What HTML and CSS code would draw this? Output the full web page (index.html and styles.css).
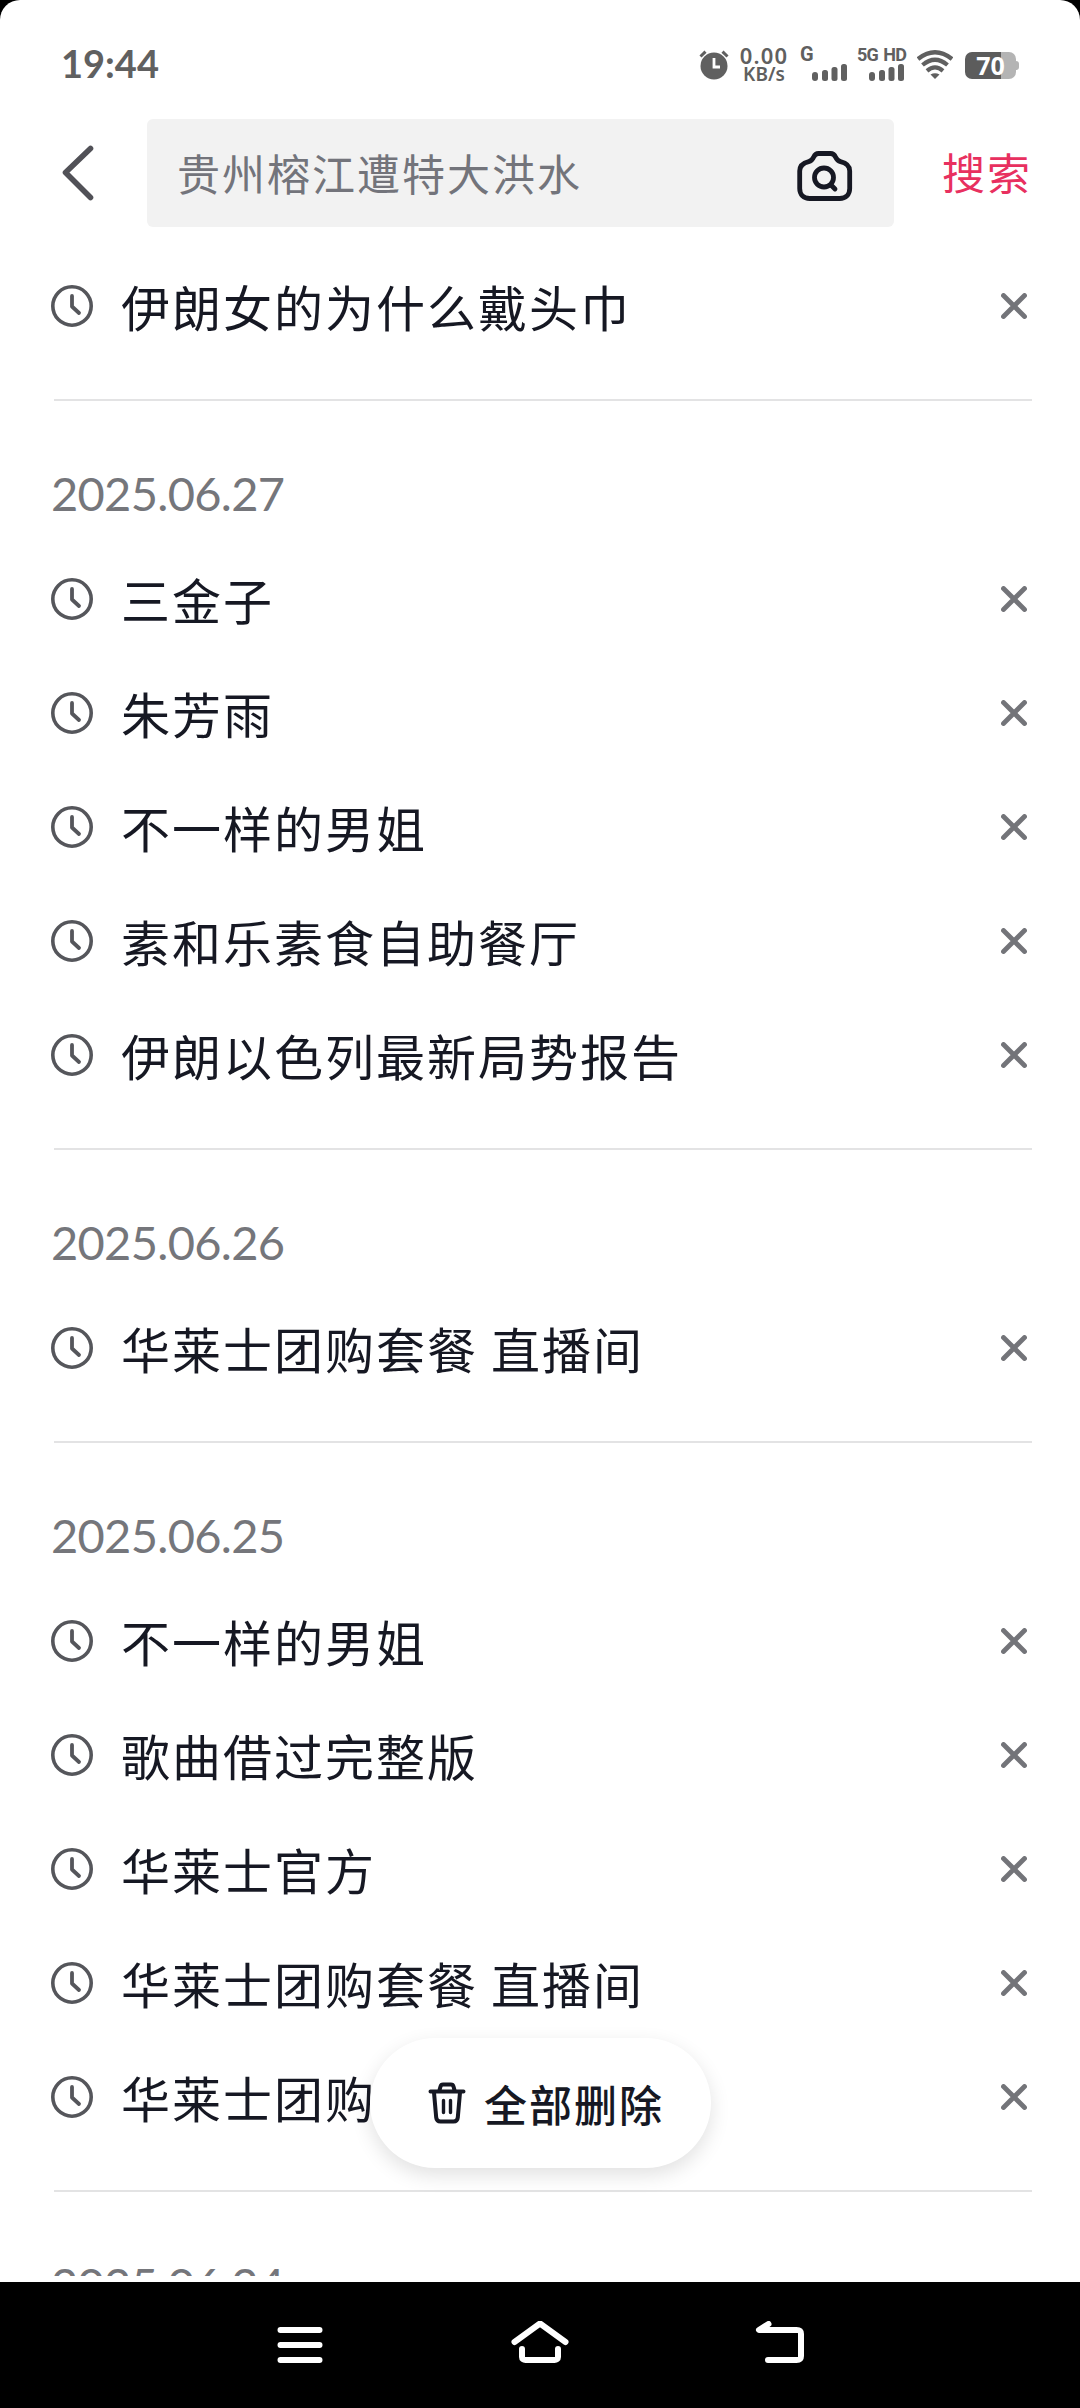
FILE: index.html
```html
<!DOCTYPE html>
<html lang="zh-CN">
<head>
<meta charset="utf-8">
<title>搜索历史</title>
<link rel="stylesheet" href="styles.css">
</head>
<body>
<svg class="sprite" aria-hidden="true">
  <symbol id="clock" viewBox="0 0 42 42"><circle cx="21" cy="21" r="19.2" stroke-width="3.6"/><path d="M21 11v10.5l7 6.5" stroke-width="3.8"/></symbol>
  <symbol id="close" viewBox="0 0 26 26"><path d="M2.5 2.5l21 21M23.5 2.5l-21 21" stroke-width="4.8"/></symbol>
</svg>
<div class="phone">
  <div class="screen">
    <header class="status">
      <span class="time">19:44</span>
      <div class="indicators">
        <svg class="alarm" viewBox="0 0 30 30" width="30" height="30"><circle cx="15" cy="16" r="13.5" fill="#606060"/><path d="M1.500 6.500l5-4.800M28.500 6.500l-5-4.800" stroke="#606060" stroke-width="3"/><path d="M15 8v9h6" fill="none" stroke="#fff" stroke-width="2.800"/></svg>
        <div class="speed"><span class="rate">0.00</span><span class="unit">KB/s</span></div>
        <div class="signal first"><span class="net">G</span><svg viewBox="0 0 36 17" width="36" height="17"><g fill="#606060"><rect x="0" y="8" width="6" height="9" rx="3"/><rect x="10" y="6" width="6" height="11" rx="2.500"/><rect x="19.500" y="3" width="6" height="14" rx="2.500"/><rect x="29" y="0" width="6" height="17" rx="2.500"/></g></svg></div>
        <div class="signal second"><span class="net">5G HD</span><svg viewBox="0 0 36 17" width="36" height="17"><g fill="#606060"><rect x="0" y="8" width="6" height="9" rx="3"/><rect x="10" y="6" width="6" height="11" rx="2.500"/><rect x="19.500" y="3" width="6" height="14" rx="2.500"/><rect x="29" y="0" width="6" height="17" rx="2.500"/></g></svg></div>
        <svg class="wifi" viewBox="0 0 36 30" width="36" height="30"><g fill="none" stroke="#606060" stroke-width="4.200"><path d="M1 9Q18-4.500 35 9"/><path d="M5.500 15Q18 4.500 30.500 15"/><path d="M10 20.800Q18 14 26 20.800"/></g><path d="M13.500 24.500Q18 22 22.500 24.500L18 29z" fill="#606060"/></svg>
        <div class="battery"><span class="level">70</span></div>
      </div>
    </header>
    <div class="searchbar">
      <svg class="back" viewBox="0 0 32 56" width="32" height="56"><path d="M28.500 3.500L3.500 27.500l25 25" fill="none" stroke="#515157" stroke-width="5.600" stroke-linecap="round" stroke-linejoin="round"/></svg>
      <div class="field">
        <span class="query">贵州榕江遭特大洪水</span>
        <svg viewBox="0 0 56 50" width="56" height="50" fill="none" stroke="#161823" stroke-width="4.800" stroke-linecap="round" stroke-linejoin="round"><path d="M21.500 2.500h12c2.500 0 4 1.300 5 3.500 1.200 2.600 2.500 4 5 4.600C49.500 12 52.700 15 52.700 20v17.500c0 6-4 10-10 10h-30c-6 0-10-4-10-10V20c0-5 3.300-8 9-9.400 2.500-.6 3.800-2 5-4.600 1-2.200 2.500-3.500 4.800-3.500z"/><circle cx="27" cy="26.500" r="9.500"/><path d="M34 34l4 4"/></svg>
      </div>
      <span class="submit">搜索</span>
    </div>
    <main class="history">
      <section class="day">
        <div class="row"><svg class="clock"><use href="#clock"/></svg><span class="term">伊朗女的为什么戴头巾</span><svg class="close"><use href="#close"/></svg></div>
      </section>
      <section class="day">
        <h2 class="date">2025.06.27</h2>
        <div class="row"><svg class="clock"><use href="#clock"/></svg><span class="term">三金子</span><svg class="close"><use href="#close"/></svg></div>
        <div class="row"><svg class="clock"><use href="#clock"/></svg><span class="term">朱芳雨</span><svg class="close"><use href="#close"/></svg></div>
        <div class="row"><svg class="clock"><use href="#clock"/></svg><span class="term">不一样的男姐</span><svg class="close"><use href="#close"/></svg></div>
        <div class="row"><svg class="clock"><use href="#clock"/></svg><span class="term">素和乐素食自助餐厅</span><svg class="close"><use href="#close"/></svg></div>
        <div class="row"><svg class="clock"><use href="#clock"/></svg><span class="term">伊朗以色列最新局势报告</span><svg class="close"><use href="#close"/></svg></div>
      </section>
      <section class="day">
        <h2 class="date">2025.06.26</h2>
        <div class="row"><svg class="clock"><use href="#clock"/></svg><span class="term">华莱士团购套餐 直播间</span><svg class="close"><use href="#close"/></svg></div>
      </section>
      <section class="day">
        <h2 class="date">2025.06.25</h2>
        <div class="row"><svg class="clock"><use href="#clock"/></svg><span class="term">不一样的男姐</span><svg class="close"><use href="#close"/></svg></div>
        <div class="row"><svg class="clock"><use href="#clock"/></svg><span class="term">歌曲借过完整版</span><svg class="close"><use href="#close"/></svg></div>
        <div class="row"><svg class="clock"><use href="#clock"/></svg><span class="term">华莱士官方</span><svg class="close"><use href="#close"/></svg></div>
        <div class="row"><svg class="clock"><use href="#clock"/></svg><span class="term">华莱士团购套餐 直播间</span><svg class="close"><use href="#close"/></svg></div>
        <div class="row"><svg class="clock"><use href="#clock"/></svg><span class="term">华莱士团购</span><svg class="close"><use href="#close"/></svg></div>
      </section>
      <section class="day">
        <h2 class="date">2025.06.24</h2>
      </section>
    </main>
    <div class="clear">
      <svg viewBox="0 0 38 42" width="38" height="42" fill="none" stroke="#161823" stroke-width="4" stroke-linecap="round" stroke-linejoin="round"><path d="M2.500 9.500h33M11.500 8l1-3.500c.4-1.500 1.200-2 2.500-2h8c1.300 0 2.100.5 2.500 2l1 3.500M6 10.500l2.200 25c.3 2.800 1.700 4 4.300 4h13c2.600 0 4-1.200 4.300-4l2.200-25"/><path d="M15.500 18.500v12M22.500 18.500v12" stroke-width="3.400"/></svg>
      <span>全部删除</span>
    </div>
  </div>
  <nav class="navbar">
    <svg viewBox="0 0 46 36" width="46" height="36"><path d="M3.500 3h39M3.500 18h39M3.500 33h39" stroke="#fff" stroke-width="6" stroke-linecap="round"/></svg>
    <svg viewBox="0 0 60 48" width="60" height="48" fill="none" stroke="#fff" stroke-width="6" stroke-linecap="round" stroke-linejoin="round"><path d="M5.500 21L31 2.500l25.500 18.500M13 28v8c0 2 1.500 3 3.500 3h29c2 0 3.500-1 3.500-3v-8"/></svg>
    <svg viewBox="0 0 50 48" width="50" height="48" fill="none" stroke="#fff" stroke-width="6" stroke-linecap="round" stroke-linejoin="round"><path d="M13.500 3L4 9h37.500c3.500 0 4.500 1 4.500 4v22c0 3-1 4-4.500 4H13"/></svg>
  </nav>
</div>
</body>
</html>
```
FILE: styles.css
```css
* { box-sizing: border-box; }
body {
  margin: 0;
  background: #000;
  font-family: "Noto Sans CJK SC", sans-serif;
  color: #161823;
}
.sprite { position: absolute; width: 0; height: 0; }
.phone { width: 1080px; height: 2408px; display: flex; flex-direction: column; overflow: hidden; }
.screen {
  position: relative;
  height: 2282px;
  display: flex;
  flex-direction: column;
  background: #fff;
  border-radius: 20px 20px 0 0;
  overflow: hidden;
}
.status {
  height: 119px;
  flex: none;
  display: flex;
  align-items: flex-start;
  justify-content: space-between;
  padding: 46px 61px 0 61px;
  color: #606060;
  font-family: Lato, sans-serif;
  font-weight: 700;
}
.time { font-size: 38px; line-height: 34px; }
.indicators { display: flex; align-items: flex-start; }
.alarm { margin-top: 4px; }
.speed {
  width: 50px;
  margin-left: 10px;
  display: flex;
  flex-direction: column;
  align-items: center;
  font-family: "Noto Sans", sans-serif;
  font-weight: 600;
}
.rate { font-size: 22px; line-height: 18px; letter-spacing: 1.2px; }
.unit { font-size: 19px; line-height: 20px; }
.signal {
  display: flex;
  flex-direction: column;
  font-family: Roboto, sans-serif;
  font-size: 18px;
  line-height: 17px;
  letter-spacing: -.9px;
  word-spacing: 2px;
}
.signal svg { align-self: flex-end; margin-top: 1px; }
.first { width: 48px; margin-left: 11px; }
.second { width: 48px; margin-left: 9px; }
.net { white-space: nowrap; }
.first .net { font-size: 20px; }
.wifi { margin: 4px 0 0 12px; }
.battery { width: 54px; margin: 6px 0 0 12px; display: flex; align-items: center; }
.level {
  width: 51px;
  height: 27px;
  border-radius: 7px;
  background: linear-gradient(90deg, #5c5c5c 70%, #b4b4b4 70%);
  color: #fff;
  text-align: center;
  font: 700 25px/27px "Noto Sans", sans-serif;
}
.battery::after { content: ""; width: 3px; height: 9px; border-radius: 0 3px 3px 0; background: #b4b4b4; }
.searchbar { height: 130px; flex: none; display: flex; align-items: flex-start; padding-left: 62px; }
.back { margin-top: 26px; }
.field {
  width: 747px;
  height: 108px;
  margin-left: 53px;
  border-radius: 6px;
  background: #f2f2f2;
  display: flex;
  align-items: center;
  justify-content: space-between;
  padding: 6px 41px 0 30px;
}
.query { padding-bottom: 9px; font-size: 43px; line-height: 60px; letter-spacing: 2px; color: #73747b; }
.submit { margin: 22px 0 0 48px; font-size: 43px; line-height: 60px; letter-spacing: 2px; color: #e8305f; }
.history { flex: none; height: 2027px; overflow: hidden; }
.day:not(:last-child)::after {
  content: "";
  display: block;
  height: 2px;
  margin: 36px 48px 0 54px;
  background: #e3e3e4;
}
.date {
  height: 141px;
  margin: 0;
  padding-left: 51px;
  font: 400 47px/185px Lato, sans-serif;
  letter-spacing: -.7px;
  color: #75767b;
}
.row { height: 114px; display: flex; align-items: center; padding: 0 53px 0 51px; }
.row svg { fill: none; stroke: #737479; stroke-linecap: round; stroke-linejoin: round; flex: none; }
.row .clock { width: 42px; height: 42px; stroke: #55565b; }
.row .close { width: 26px; height: 26px; margin-left: auto; }
.term { margin-left: 28px; font-size: 49px; line-height: 72px; letter-spacing: 2px; white-space: nowrap; }
.clear {
  position: absolute;
  left: 370px;
  top: 2038px;
  width: 341px;
  height: 130px;
  border-radius: 65px;
  background: #fff;
  box-shadow: 0 7px 20px rgba(0, 0, 0, .12);
  display: flex;
  align-items: center;
  padding-left: 58px;
  font-size: 43px;
  font-weight: 500;
  letter-spacing: 2px;
}
.clear span { margin-left: 18px; }
.navbar { height: 126px; display: flex; align-items: center; justify-content: space-between; padding: 0 275px 0 277px; }
```
